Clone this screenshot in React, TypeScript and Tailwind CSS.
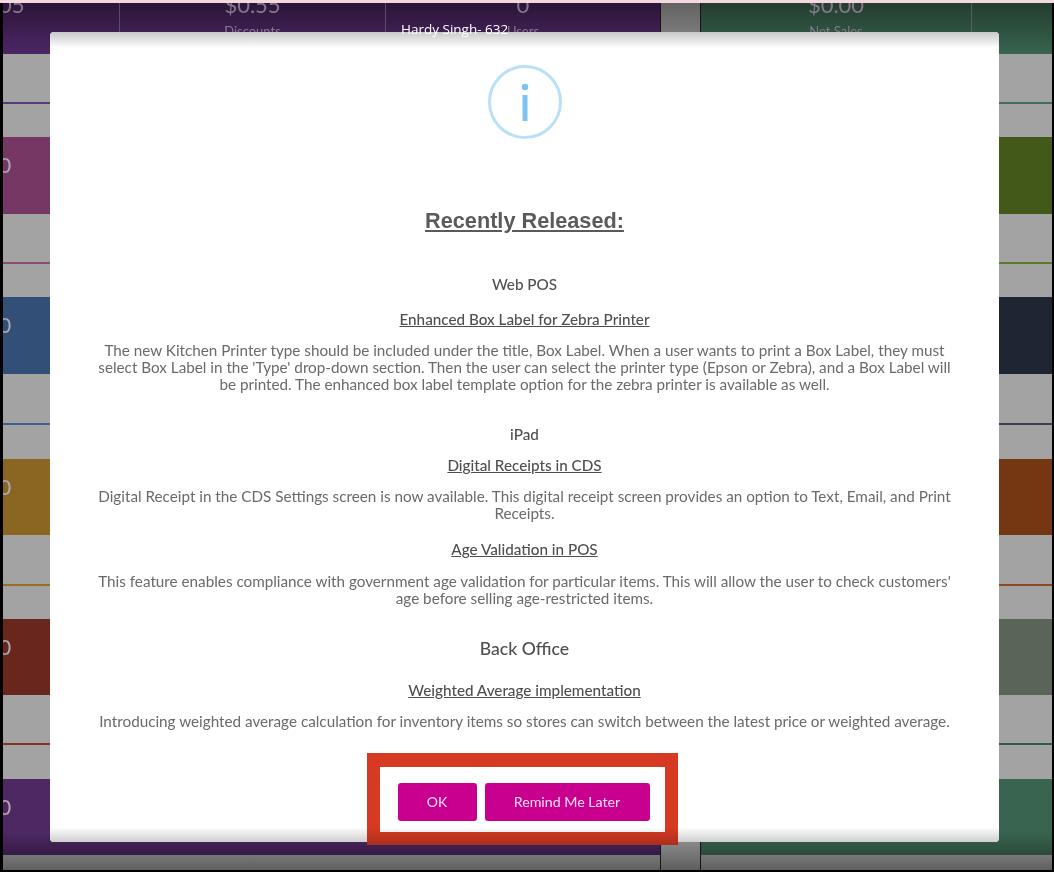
import React from 'react';

const leftRows = [
  { gray: 'h-[83px] pt-[48px]', line: 'bg-[#5c3a78]', card: 'h-[77px] bg-[#763765]', value: true },
  { gray: 'h-[83px] pt-[48px]', line: 'bg-[#8a4a7a]', card: 'h-[77px] bg-[#324f78]', value: true },
  { gray: 'h-[85px] pt-[49px]', line: 'bg-[#3f5f8f]', card: 'h-[76px] bg-[#8b6522]', value: true },
  { gray: 'h-[84px] pt-[49px]', line: 'bg-[#9a6f22]', card: 'h-[76px] bg-[#69261d]', value: true },
  { gray: 'h-[84px] pt-[48px]', line: 'bg-[#8a2f22]', card: 'h-[76px] bg-linear-to-b from-[#4d2863] from-70% to-[#361a45]', value: true },
];

const rightRows = [
  { gray: 'h-[83px] pt-[48px]', line: 'bg-[#3f6f58]', card: 'h-[77px] bg-[#42591a]', value: false },
  { gray: 'h-[83px] pt-[48px]', line: 'bg-[#5c7a2c]', card: 'h-[77px] bg-[#1e2533]', value: false },
  { gray: 'h-[85px] pt-[49px]', line: 'bg-[#3a3f50]', card: 'h-[76px] bg-[#753711]', value: false },
  { gray: 'h-[84px] pt-[49px]', line: 'bg-[#8a4a22]', card: 'h-[76px] bg-[#596557]', value: false },
  { gray: 'h-[84px] pt-[48px]', line: 'bg-[#2f5a45]', card: 'h-[76px] bg-linear-to-b from-[#386450] from-70% to-[#2b4a3a]', value: false },
];

type Row = (typeof leftRows)[number];

const RowStack = ({ rows }: { rows: Row[] }) => (
  <>
    {rows.map((row, index) => (
      <div key={index}>
        <div className={`${row.gray} bg-[#a3a3a3]`}>
          <div className={`h-[2px] ${row.line}`}></div>
        </div>
        <div className={`${row.card} overflow-hidden`}>
          {row.value && <div className="-ml-[4px] pt-[16px] text-[21px] leading-[24px] text-[#b0a8b0]">0</div>}
        </div>
      </div>
    ))}
  </>
);

const HeaderCell = ({ value, label, className }: { value: string; label: string; className: string }) => (
  <div className={`${className} flex h-full flex-col items-center justify-start overflow-hidden border-r border-[#7a6a80]/60 text-[#85788c]`}>
    <div className="-mt-[11px] text-[22px] leading-[26px]">{value}</div>
    <div className="mt-[5px] text-[13px] leading-[16px]">{label}</div>
  </div>
);

const InfoIcon = () => (
  <svg width="74" height="74" viewBox="0 0 74 74" fill="none">
    <circle cx="37" cy="37" r="35.5" stroke="#b9e0f6" strokeWidth="3" />
    <circle cx="37" cy="22" r="3.2" fill="#7cc4f0" />
    <rect x="34.5" y="30" width="5" height="26" fill="#7cc4f0" />
  </svg>
);

const Title = ({ children, className }: { children: React.ReactNode; className: string }) => (
  <div className={`${className} text-[15.25px] leading-[17px] font-medium text-[#4f4f4f] underline`}>{children}</div>
);

const Body = ({ children, className }: { children: React.ReactNode; className: string }) => (
  <p className={`${className} w-[862px] text-[15.25px] leading-[17px] text-[#6a6a6a]`}>{children}</p>
);

const App: React.FC = () => {
  return (
    <div className="relative h-[872px] w-[1054px] overflow-hidden bg-black font-['Lato',sans-serif] blur-[0.5px]">
      <div className="h-[3px] bg-[#f3d9de]"></div>

      {/* POS screen behind the dialog */}
      <div className="ml-[3px] flex h-[867px] w-[1049px]">
        <div className="w-[657px] overflow-hidden">
          <div className="flex h-[51px] bg-linear-to-b from-[#2d1538] to-[#4c2666]">
            <div className="flex h-full w-[117px] justify-start overflow-hidden border-r border-[#7a6a80]/60 text-[#85788c]">
              <div className="-mt-[11px] -ml-[4px] text-[22px] leading-[26px]">05</div>
            </div>
            <HeaderCell value="$0.55" label="Discounts" className="w-[266px]" />
            <HeaderCell value="0" label="Users" className="w-[274px] border-r-0" />
          </div>
          <RowStack rows={leftRows} />
          <div className="h-[15px] bg-linear-to-b from-[#787878] to-[#5f5f5f]"></div>
        </div>

        <div className="flex w-[41px] flex-col border-x border-[#3a2a40]/40">
          <div className="h-[51px] bg-linear-to-b from-[#626262] to-[#8c8c8c]"></div>
          <div className="flex-1 bg-[#a3a3a3]"></div>
          <div className="h-[30px] bg-linear-to-b from-[#8c8c8c] to-[#5f5f5f]"></div>
        </div>

        <div className="flex-1 overflow-hidden">
          <div className="flex h-[51px] bg-linear-to-b from-[#233d2e] to-[#386450]">
            <HeaderCell value="$0.00" label="Net Sales" className="w-[271px]" />
          </div>
          <RowStack rows={rightRows} />
          <div className="h-[15px] bg-linear-to-b from-[#787878] to-[#5f5f5f]"></div>
        </div>
      </div>

      {/* Release notes dialog */}
      <div className="absolute top-[32px] left-[50px] flex h-[810px] w-[949px] flex-col items-center rounded-[4px] bg-white text-center">
        <div className="absolute inset-x-0 top-0 h-[16px] rounded-t-[4px] bg-linear-to-b from-[#c9c9c9] to-white"></div>
        <div className="absolute inset-x-0 bottom-0 h-[15px] rounded-b-[4px] bg-linear-to-b from-white to-[#cfcfcf]"></div>

        <div className="relative mt-[33px]">
          <InfoIcon />
        </div>
        <h2 className="mt-[69px] font-['Liberation_Sans',sans-serif] text-[21.7px] leading-[26px] font-bold text-[#5a5a5a] underline">
          Recently Released:
        </h2>
        <div className="mt-[42px] text-[15.25px] leading-[17px] font-medium text-[#4f4f4f]">Web POS</div>
        <Title className="mt-[18px]">Enhanced Box Label for Zebra Printer</Title>
        <Body className="mt-[14px]">
          The new Kitchen Printer type should be included under the title, Box Label. When a user wants to print a Box Label, they must select Box Label in the 'Type' drop-down section. Then the user can select the printer type (Epson or Zebra), and a Box Label will be printed. The enhanced box label template option for the zebra printer is available as well.
        </Body>
        <div className="mt-[33px] text-[15.25px] leading-[17px] font-medium text-[#4f4f4f]">iPad</div>
        <Title className="mt-[14px]">Digital Receipts in CDS</Title>
        <Body className="mt-[14px]">
          Digital Receipt in the CDS Settings screen is now available. This digital receipt screen provides an option to Text, Email, and Print Receipts.
        </Body>
        <Title className="mt-[19px]">Age Validation in POS</Title>
        <Body className="mt-[15px]">
          This feature enables compliance with government age validation for particular items. This will allow the user to check customers' age before selling age-restricted items.
        </Body>
        <div className="mt-[32px] text-[17.6px] leading-[20px] font-medium text-[#4f4f4f]">Back Office</div>
        <Title className="mt-[23px]">Weighted Average implementation</Title>
        <Body className="mt-[14px]">
          Introducing weighted average calculation for inventory items so stores can switch between the latest price or weighted average.
        </Body>

        <div className="relative mt-auto -mb-[3px] -ml-[5px] flex h-[92px] w-[311px] border-[13px] border-t-[14px] border-[#d63a22] bg-white pt-[16px] pl-[18px]">
          <button className="h-[38px] w-[79px] rounded-[3px] bg-[#c9008f] text-[14px] leading-[36px] text-[#f8e0f0]">OK</button>
          <button className="ml-[8px] h-[38px] w-[165px] rounded-[3px] bg-[#c9008f] text-[14.2px] leading-[36px] text-[#f8e0f0]">Remind Me Later</button>
          <div className="absolute inset-x-[-13px] bottom-[-13px] h-[18px] bg-linear-to-b from-transparent to-black/20"></div>
        </div>
      </div>

      <div className="absolute top-[20px] left-[401px] font-['Open_Sans',sans-serif] text-[13.5px] leading-[18px] text-white">Hardy Singh- 632</div>
    </div>
  );
};

export default App;
